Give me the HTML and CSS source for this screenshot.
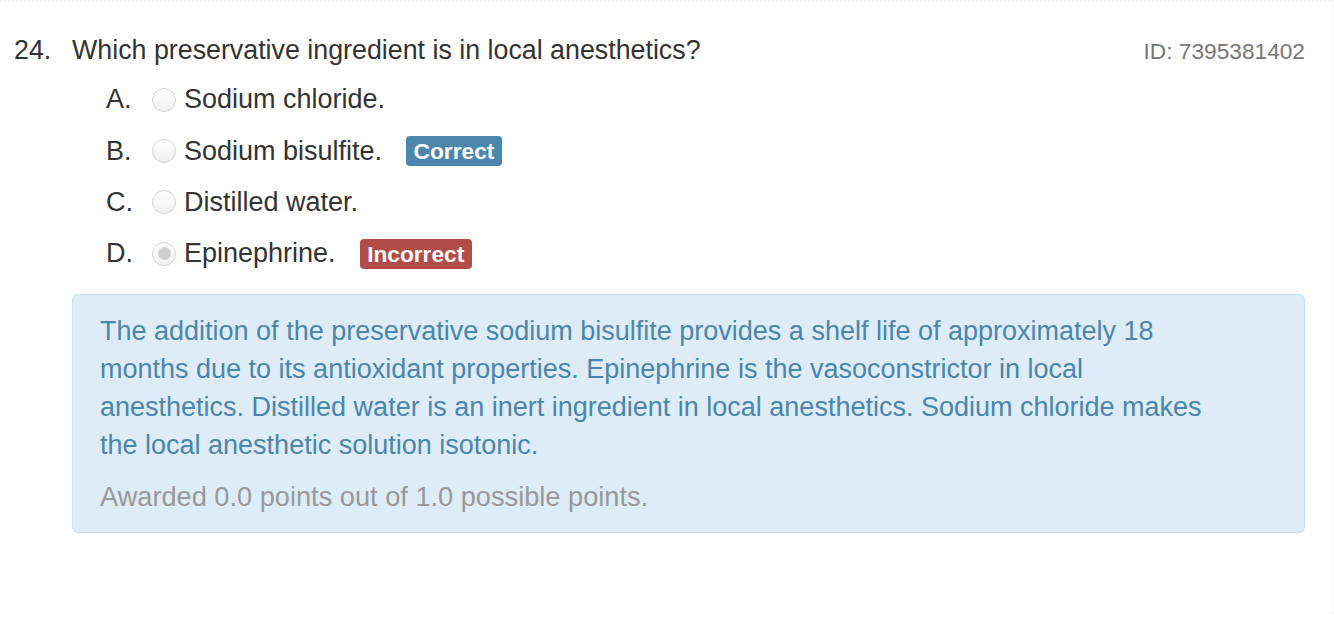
FILE: index.html
```html
<!DOCTYPE html>
<html>
<head>
<meta charset="utf-8">
<link rel="stylesheet" href="styles.css">
</head>
<body>
<div class="question">
  <div class="q-head">
    <span class="q-num">24.</span>
    <span class="q-text">Which preservative ingredient is in local anesthetics?</span>
    <span class="q-id">ID: 7395381402</span>
  </div>
  <ul class="options">
    <li class="option"><span class="letter">A.</span><span class="radio"></span><span class="opt-text">Sodium chloride.</span></li>
    <li class="option"><span class="letter">B.</span><span class="radio"></span><span class="opt-text">Sodium bisulfite.</span><span class="badge badge-correct">Correct</span></li>
    <li class="option"><span class="letter">C.</span><span class="radio"></span><span class="opt-text">Distilled water.</span></li>
    <li class="option"><span class="letter">D.</span><span class="radio checked"></span><span class="opt-text">Epinephrine.</span><span class="badge badge-incorrect">Incorrect</span></li>
  </ul>
  <div class="explanation">
    <p class="exp-text">The addition of the preservative sodium bisulfite provides a shelf life of approximately 18 months due to its antioxidant properties. Epinephrine is the vasoconstrictor in local anesthetics. Distilled water is an inert ingredient in local anesthetics. Sodium chloride makes the local anesthetic solution isotonic.</p>
    <p class="awarded">Awarded 0.0 points out of 1.0 possible points.</p>
  </div>
</div>
</body>
</html>
```
FILE: styles.css
```css
html, body {
  margin: 0;
  padding: 0;
  background: #fff;
}
body {
  font-family: "Liberation Sans", Arial, sans-serif;
  color: #333;
}
.question {
  border-top: 2px dotted #f0f0f0;
  border-right: 1px solid #f6f6f6;
  height: 615px;
  box-sizing: border-box;
  padding: 31px 28px 0 14px;
}
.q-head {
  display: flex;
  align-items: baseline;
  font-size: 26.8px;
  line-height: 34px;
}
.q-num {
  width: 58px;
  flex: none;
}
.q-text {
  flex: 1;
}
.q-id {
  font-size: 22.7px;
  color: #777;
}
.options {
  list-style: none;
  margin: 6px 0 0;
  padding: 0 0 0 92px;
}
.option {
  display: flex;
  align-items: center;
  height: 51.4px;
  font-size: 27px;
}
.letter {
  width: 46px;
  flex: none;
}
.radio {
  width: 22px;
  height: 22px;
  border: 1px solid #d4d4d4;
  border-radius: 50%;
  background: linear-gradient(#fff, #f0f0f0);
  box-sizing: content-box;
  flex: none;
  margin-right: 8px;
  display: flex;
  align-items: center;
  justify-content: center;
}
.radio.checked::after {
  content: "";
  width: 13px;
  height: 13px;
  border-radius: 50%;
  background: #cfcfcf;
}
.badge {
  display: inline-block;
  margin-left: 24px;
  height: 30px;
  line-height: 30px;
  padding: 0 7.5px;
  border-radius: 4px;
  color: #fff;
  font-weight: bold;
  font-size: 22.7px;
}
.badge-correct {
  background: #4a86ad;
}
.badge-incorrect {
  background: #b24c48;
}
.explanation {
  margin: 14px 0 0 58px;
  background: #deecf7;
  border: 1px solid #c5e3ef;
  border-radius: 6px;
  padding: 17px 85px 16px 27px;
}
.exp-text {
  margin: 0;
  font-size: 27px;
  line-height: 38px;
  color: #4a86ad;
}
.awarded {
  margin: 14px 0 0;
  font-size: 27.2px;
  line-height: 38px;
  color: #999;
}
```
